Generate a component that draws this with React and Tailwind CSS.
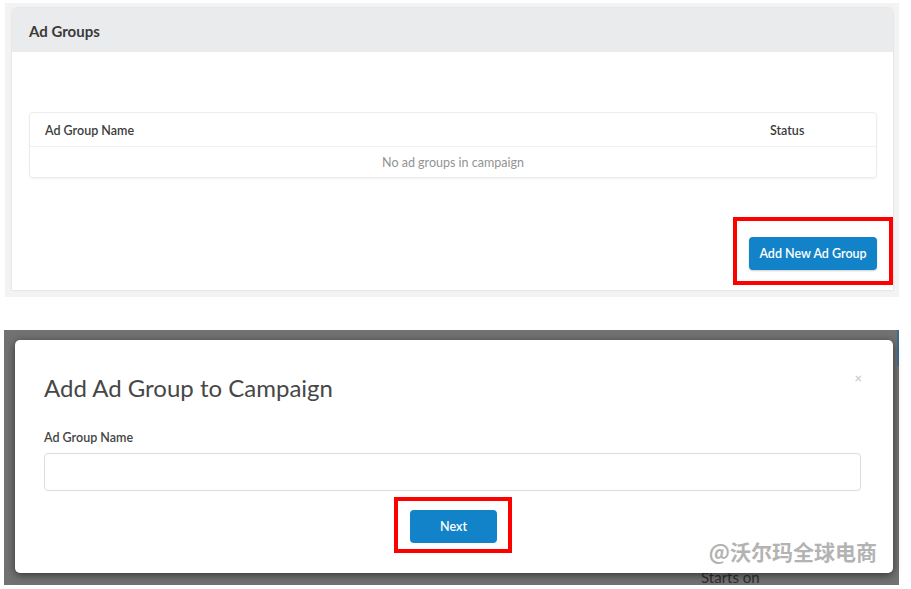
export default function App() {
  return (
    <div className="relative w-[911px] h-[589px] overflow-hidden bg-white font-['Lato','Noto_Sans',sans-serif]">
      {/* Top section */}
      <div className="pt-[3px] pl-[5px]">
        <div className="w-[894px] h-[294px] bg-[#f3f3f3] pt-[5px] pl-[7px]">
          <div className="w-[881px] h-[282px] bg-white rounded-t-[6px] shadow-[0_0_2px_rgba(0,0,0,0.18)] flex flex-col">
            <div className="h-[44px] bg-[#eaebec] rounded-t-[6px] pl-[17px] pt-[2px] flex items-center text-[15px] font-bold text-[#3a3a3a]">
              Ad Groups
            </div>
            <div className="pl-[17px] pt-[60px] flex flex-col">
              <div className="mr-[16px] border border-[#ececec] rounded-[4px] shadow-[0_1px_2px_rgba(0,0,0,0.06)]">
                <div className="h-[34px] pt-[3px] grid grid-cols-[1fr_107px] items-center border-b border-[#f1f1f1] text-[12.5px] font-semibold text-[#3c3c3c]">
                  <div className="pl-[15px]">Ad Group Name</div>
                  <div className="pl-px">Status</div>
                </div>
                <div className="h-[30px] pt-[2px] flex items-center justify-center text-[12.5px] text-[#939393]">
                  No ad groups in campaign
                </div>
              </div>
              <div className="mt-[39px] flex justify-end">
                <div className="border-[4px] border-[#ff0000] pt-[16px] pb-[11px] px-[12px]">
                  <button className="w-[128px] h-[33px] pt-[2px] rounded-[4px] bg-[#1283c8] text-white text-[12.5px] font-semibold shadow-[0_1px_2px_rgba(0,0,0,0.2)]">
                    Add New Ad Group
                  </button>
                </div>
              </div>
            </div>
          </div>
        </div>
      </div>

      {/* Bottom section: dimmed page with modal */}
      <div className="relative mt-[33px] ml-[4px] w-[895px] h-[255px] bg-[#727272] pt-[10px] pl-[11px]">
        <div className="absolute right-0 top-0 w-[2px] h-[36px] bg-[#3b6d8f]" />
        <div className="absolute left-[697px] top-[238px] text-[15px] leading-[18px] text-[#2e2e2e]">
          Starts on
        </div>

        <div className="relative w-[878px] h-[233px] bg-white rounded-[5px] shadow-[0_2px_8px_rgba(0,0,0,0.55)] pt-[34px] pl-[29px] pr-[31px] flex flex-col">
          <div className="h-[28px] leading-[28px] text-[24px] text-[#474747]">
            Add Ad Group to Campaign
          </div>
          <div className="absolute right-[31px] top-[31px] text-[13px] leading-[14px] text-[#c2c2c2]">
            ×
          </div>
          <div className="mt-[29px] h-[14px] leading-[14px] text-[12.5px] font-semibold text-[#444]">
            Ad Group Name
          </div>
          <div className="mt-[8px] h-[38px] w-[817px] border border-[#dcdcdc] rounded-[4px]" />
          <div className="mt-[6px] flex justify-center">
            <div className="border-[4px] border-[#ff0000] pt-[9px] pb-[6px] pl-[12px] pr-[11px]">
              <button className="w-[87px] h-[33px] pt-[2px] rounded-[4px] bg-[#1283c8] text-white text-[12.5px] font-semibold">
                Next
              </button>
            </div>
          </div>
          {/* Watermark */}
          <div className="absolute right-[16px] bottom-[10px] text-[21px] leading-[24px] font-bold text-[#b3b3b3] font-['Noto_Sans_CJK_SC',sans-serif] [text-shadow:0_0_1px_#fff,1px_1px_0_#fff,-1px_-1px_0_#fff,1px_-1px_0_#fff,-1px_1px_0_#fff]">
            @沃尔玛全球电商
          </div>
        </div>
      </div>
    </div>
  );
}
